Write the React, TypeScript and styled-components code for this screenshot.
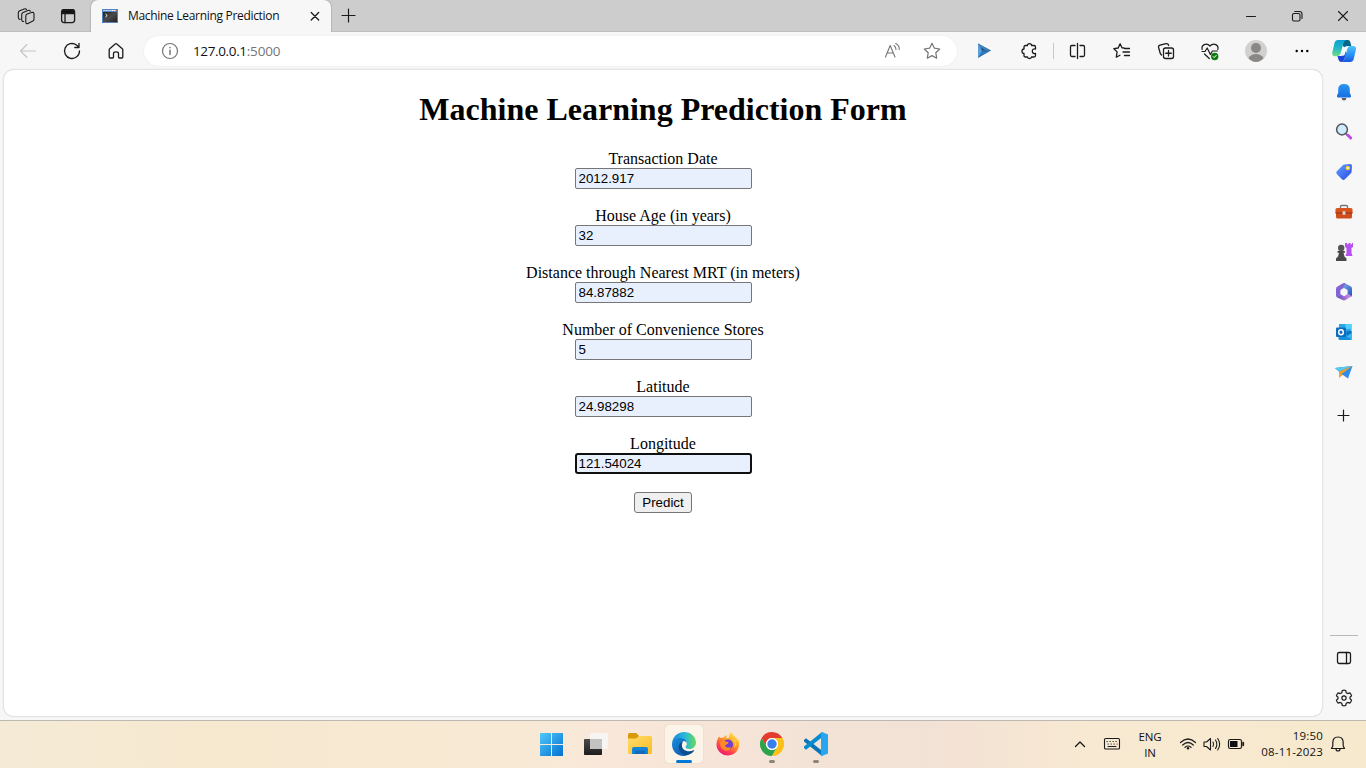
import React from 'react';
import styled, { createGlobalStyle } from 'styled-components';

const GlobalStyle = createGlobalStyle`
  * { box-sizing: border-box; }
  body { margin: 0; overflow: hidden; background: #f7f7f7; }
`;

const ui = `'Open Sans', 'Noto Sans', sans-serif`;

const Screen = styled.div`
  display: flex;
  flex-direction: column;
  width: 1366px;
  height: 768px;
  overflow: hidden;
  background: #f7f7f7;
  font-family: ${ui};
  color: #111;
`;

const Slot = styled.div<{ $w: number; $h?: number }>`
  flex: none;
  display: flex;
  align-items: center;
  justify-content: center;
  width: ${(p) => p.$w}px;
  height: ${(p) => (p.$h ? `${p.$h}px` : '100%')};
  svg { display: block; overflow: visible; }
`;

const TabStrip = styled.header`
  display: flex;
  flex: none;
  height: 32px;
  background: #cdcdcd;
  box-shadow: inset 0 -1px 0 #c0c0c0;
`;

const Tab = styled.div`
  display: flex;
  align-items: center;
  width: 240px;
  height: 32px;
  padding-left: 11px;
  background: #f7f7f7;
  border-radius: 7px 7px 0 0;
  box-shadow: 0 0 2px rgba(0, 0, 0, 0.35);
  clip-path: inset(-3px -3px 0 -3px);
`;

const TabTitle = styled.span`
  width: 170px;
  margin-left: 10px;
  font-size: 12px;
  line-height: 16px;
  letter-spacing: -0.31px;
  white-space: nowrap;
`;

const Spacer = styled.div`
  flex: 1;
`;

const Toolbar = styled.nav`
  display: flex;
  flex: none;
  align-items: center;
  height: 38px;
  padding-left: 6px;
`;

const AddressBar = styled.div`
  display: flex;
  align-items: center;
  width: 813px;
  height: 30px;
  margin-left: 6px;
  padding-left: 6px;
  border-radius: 15px;
  background: #fff;
  box-shadow: 0 0 3px rgba(0, 0, 0, 0.06);
`;

const Url = styled.span`
  flex: 1;
  margin-left: 3px;
  font-size: 13.5px;
  line-height: 20px;
  letter-spacing: -0.36px;
  span { color: #767676; letter-spacing: -0.15px; }
`;

const VLine = styled.div`
  width: 1px;
  height: 16px;
  background: #c8c8c8;
`;

const Middle = styled.div`
  display: flex;
  flex: none;
  height: 650px;
  padding-left: 4px;
`;

const Page = styled.main`
  width: 1318px;
  height: 646px;
  border-radius: 9px;
  background: #fff;
  box-shadow: 0 0 2px rgba(0, 0, 0, 0.3);
  font-family: 'Liberation Serif', serif;
  color: #000;
`;

const Heading = styled.h1`
  margin: 0;
  padding-top: 21px;
  font-size: 32px;
  line-height: 37px;
  text-align: center;
`;

const Form = styled.form`
  display: flex;
  flex-direction: column;
  align-items: center;
  gap: 18px;
  padding-top: 22px;
`;

const Field = styled.label`
  display: flex;
  flex-direction: column;
  align-items: center;
  font-size: 16px;
  line-height: 18px;
`;

const Input = styled.input<{ $active?: boolean }>`
  width: 177px;
  height: 21px;
  margin: 0;
  padding: ${(p) => (p.$active ? '0 2px' : '1px 3px')};
  border: ${(p) => (p.$active ? '2px solid #101010' : '1px solid #767676')};
  border-radius: ${(p) => (p.$active ? 3 : 2)}px;
  outline: none;
  background: #e8f0fe;
  color: #000;
  font: 13.333px 'Liberation Sans', sans-serif;
`;

const Submit = styled.button`
  width: 58px;
  height: 21px;
  padding: 0;
  border: 1px solid #767676;
  border-radius: 3px;
  background: #efefef;
  color: #000;
  font: 13.333px 'Liberation Sans', sans-serif;
`;

const Sidebar = styled.aside`
  display: flex;
  flex-direction: column;
  align-items: center;
  width: 44px;
  padding-top: 2px;
`;

const HLine = styled.div`
  width: 28px;
  height: 1px;
  margin-bottom: 2px;
  background: #b9b9b9;
`;

const Taskbar = styled.footer`
  display: flex;
  flex: none;
  align-items: center;
  height: 48px;
  padding: 0 0 1px 530px;
  border-top: 1px solid #bcb9b3;
  background: linear-gradient(90deg, #f4ead5 0%, #f7e9d0 15%, #f7e9d3 35%, #f9e8d9 44%, #f3e2d6 60%, #f2e1d5 68%, #f8e9d2 80%, #f7e9cd 100%);
`;

const AppSlot = styled.div`
  display: flex;
  align-items: center;
  justify-content: center;
  width: 44px;
  height: 46px;
`;

const AppTile = styled.div<{ $active?: boolean }>`
  position: relative;
  display: flex;
  align-items: center;
  justify-content: center;
  width: 38px;
  height: 38px;
  border-radius: 4px;
  background: ${(p) => (p.$active ? '#fcf4e9' : 'transparent')};
  box-shadow: ${(p) => (p.$active ? '0 0 1px rgba(120, 90, 50, 0.35)' : 'none')};
  svg { display: block; overflow: visible; }
`;

const Indicator = styled.i<{ $active?: boolean }>`
  position: absolute;
  bottom: 0;
  left: 50%;
  width: ${(p) => (p.$active ? 16 : 6)}px;
  height: 3px;
  border-radius: 2px;
  background: ${(p) => (p.$active ? '#0078d4' : '#8b857c')};
  transform: translateX(-50%);
`;

const TrayText = styled.div<{ $w: number; $right?: boolean }>`
  flex: none;
  display: flex;
  flex-direction: column;
  align-items: ${(p) => (p.$right ? 'flex-end' : 'center')};
  width: ${(p) => p.$w}px;
  padding-top: ${(p) => (p.$right ? 0 : 2)}px;
  font-size: 11.5px;
  line-height: 16px;
  letter-spacing: ${(p) => (p.$right ? 0.17 : -0.1)}px;
  white-space: nowrap;
`;

type IconProps = { children: React.ReactNode; size?: number; stroke?: string; sw?: number };

const Line = ({ children, size = 20, stroke = '#1b1b1b', sw = 1.2 }: IconProps) => (
  <svg width={size} height={size} viewBox={`0 0 ${size} ${size}`} fill="none" stroke={stroke} strokeWidth={sw} strokeLinecap="round" strokeLinejoin="round">
    {children}
  </svg>
);

const Workspaces = () => (
  <Line sw={1.1}>
    <path d="M10.600 8.300 15.500 6.500Q18 5.800 18 8V13.300Q18 14.600 16.800 15.100L12 17.400Q9.800 18.200 9.800 16V10.200Q9.800 8.700 10.600 8.300Z" />
    <path d="M7.700 15.500Q5.700 15.600 5.700 13.600V8.600Q5.700 7.100 7.100 6.500L11.900 4.500Q13.800 3.900 14.300 5.200" />
    <path d="M4.200 13.400Q2.300 13.200 2.300 11.400V6.900Q2.300 5.400 3.700 4.700L8.200 2.900Q9.900 2.300 10.500 3.500" />
  </Line>
);
const TabActions = () => (
  <Line sw={1.3}>
    <rect x="3.600" y="3.600" width="13" height="13" rx="2.500" />
    <path d="M4.500 4h11.200l.5 3.500H4z" fill="#111" />
    <path d="M7 8v8.500" />
  </Line>
);
const Console = () => (
  <svg width="16" height="14" viewBox="0 0 16 14">
    <defs><linearGradient id="con" x2="1" y2="1"><stop stopColor="#222" /><stop offset=".5" stopColor="#4b4b4b" /><stop offset="1" stopColor="#222" /></linearGradient></defs>
    <rect width="16" height="14" fill="#5583c0" /><path d="M1 1h14v1H1z" fill="#a9c8ee" />
    <path d="M10 1h1v1h-1zM12 1h1v1h-1z" fill="#fff" /><path d="M14 1h1v1h-1z" fill="#d55" />
    <rect x="1" y="3" width="14" height="10" fill="url(#con)" /><path d="m3.500 5 1.700 1.500L3.500 8" fill="none" stroke="#fff" strokeWidth="1" />
  </svg>
);
const Back = () => <Line stroke="#c5c5c5" sw={1.1}><path d="M17.500 10H2.500M9 3.500 2.500 10 9 16.500" /></Line>;
const Refresh = () => <Line sw={1.3}><path d="M17.500 10A7.500 7.500 0 1 1 14.500 4L17 6.200M17 2.300v4.200h-4.200" /></Line>;
const Home = () => <Line sw={1.3}><path d="M3.200 8.900Q3.200 8.200 3.700 7.700L9.200 3Q10 2.400 10.800 3L16.300 7.700Q16.800 8.200 16.800 8.900V16Q16.800 17 15.800 17H13.300Q12.500 17 12.500 16V12.500Q12.500 10.800 10 10.800T7.500 12.500V16Q7.500 17 6.700 17H4.200Q3.200 17 3.200 16Z" /></Line>;
const Info = () => <Line stroke="#757575"><circle cx="10" cy="10" r="7.500" /><path d="M10 9.300v4.200M10 6.500v.2" strokeWidth="1.500" /></Line>;
const ReadAloud = () => <Line stroke="#757575" sw={1.1}><path d="M3.500 16 8.200 4.500 13 16M5.200 12H11.300M12 4.500Q14 6 14 8.500M13.700 2.500Q17.700 4.500 17.200 8.500" /></Line>;
const Star = () => <Line stroke="#757575"><path d="m10 2.300 2.400 4.900 5.300.8-3.900 3.800.9 5.400-4.700-2.600-4.700 2.600.9-5.400L2.300 8l5.300-.8Z" /></Line>;
const Play = () => (
  <svg width="14" height="16" viewBox="0 0 14 16"><path d="M1 .5 14 7.500 1 15Z" fill="#2867a5" /><path d="M1 .5 14 7.500H5Z" fill="#4482bb" /><path d="M1 15 5 8 1 .5Z" fill="#5b9fdc" /><path d="m2 13.500 10-5H5Z" fill="#327abd" /><path d="M4 4.500 9 7.500H5Z" fill="#1d4e88" /></svg>
);
const Puzzle = () => <Line sw={1.3}><path d="M8.500 4.500Q8.300 2.700 10.500 2.700T12.600 4.500H15Q16.500 4.500 16.500 6V8Q13.300 7.500 13.300 10.200T16.500 12.500V14.500Q16.500 16 15 16H12.500Q12.500 17.500 10.500 17.500T8.500 16H6.500Q5 16 5 14.500V12.500Q3 12.300 3 10.200T5 8V6Q5 4.500 6.500 4.500Z" /></Line>;
const Split = () => <Line sw={1.3}><path d="M10.500 2.500v15M8 4.500H4.800Q3.500 4.500 3.500 6v8q0 1.500 1.300 1.500H8M13 4.500h3.200Q17.500 4.500 17.500 6v8q0 1.500-1.300 1.500H13" /></Line>;
const Favorites = () => <Line sw={1.3}><path d="M12 7 10 6.800 8.100 2.800 6.200 7 1.900 7.700l3.200 3.200-.8 5.300 3.600-2M12.500 7.500h5M11 11h6.500M12.500 14.500h5" /></Line>;
const Collections = () => <Line sw={1.3}><rect x="7.500" y="7" width="10" height="10.500" rx="2" /><path d="M12.500 9.500v5.500M9.700 12.250h5.600M5.500 14 4.300 12.500 2.600 6.500Q2.200 4.700 4 4.200L10 2.600Q12 2.200 12.700 4.500" /></Line>;
const Health = () => (
  <Line sw={1.2}><path d="M2.200 8.500C1 4.300 6.200.8 10 5 13.800.8 19 4.300 17.800 8.500M2 10.500H5L7.200 7l3.200 6.500 2-3.500h5M4.500 13 9.300 17.500" /><circle cx="14.700" cy="15.500" r="3.700" fill="#107c10" stroke="none" /><path d="m13.200 15.600 1 1 2-2.200" stroke="#fff" strokeWidth="1" /></Line>
);
const Avatar = () => <svg width="22" height="22" viewBox="0 0 22 22"><circle cx="11" cy="11" r="11" fill="#d2d0ce" /><circle cx="11" cy="8" r="5" fill="#8a8886" /><path d="M3.500 18Q6 14 11 14t7.500 4Q15 22 11 22T3.500 18Z" fill="#8a8886" /></svg>;
const Dots = () => <svg width="16" height="16"><circle cx="2.700" cy="8" r="1.200" /><circle cx="8" cy="8" r="1.200" /><circle cx="13.300" cy="8" r="1.200" /></svg>;
const Copilot = () => (
  <svg width="24" height="22" viewBox="0 0 24 22">
    <defs>
      <linearGradient id="cpA" x2="0" y2="1"><stop stopColor="#0d9fd4" /><stop offset=".5" stopColor="#22b8c4" /><stop offset="1" stopColor="#72df87" /></linearGradient>
      <linearGradient id="cpB" x2="0" y2="1"><stop stopColor="#4fc6f9" /><stop offset=".6" stopColor="#258cf4" /><stop offset="1" stopColor="#1757e4" /></linearGradient>
    </defs>
    <path d="M11 0h5q1.800 0 2.300 2l1 4H16q-2 0-3 2l-2-2Z" fill="#08668b" />
    <path d="M5.500 16h4l3-7 2 4-2.500 7q-.8 2-2.500 2-2.500 0-3.200-3Z" fill="#1b45d6" />
    <path d="M6 0h8q-2 1-2.800 4L8.700 13q-.8 3.200-4.200 3.200H3.200Q-.5 16.200.4 12L2.500 3Q3.300 0 6 0Z" fill="url(#cpA)" />
    <path d="M18 6h3q3.800 0 2.800 4.200L21.700 19q-.7 3-3.700 3H9.500q2.500-.7 3.300-4l2.300-8.500Q16 6 18 6Z" fill="url(#cpB)" />
    <path d="M13.500 6.500H16q-1 .5-1.500 2.500l-1.500 5q-.5 1.700-2 1.700H9q1-.5 1.500-2.500l1.300-4.700q.5-2 1.700-2Z" fill="#f7fbff" />
  </svg>
);

const BellColor = () => <svg width="16" height="18" viewBox="0 0 16 18"><defs><linearGradient id="bl" x2="0" y2="1"><stop stopColor="#2998f2" /><stop offset="1" stopColor="#176ee1" /></linearGradient></defs><path d="M5.500 15h5q-.5 2.500-2.500 2.500T5.500 15Z" fill="#5c6066" /><path d="M2.200 6.500Q2.200 1 8 1t5.800 5.500V10L15 12.500q.5 2-1 2H2q-1.500 0-1-2l1.200-2.500Z" fill="url(#bl)" /></svg>;
const SearchColor = () => <svg width="18" height="18" viewBox="0 0 18 18"><path d="m10.500 10.500 2.500 2.500" stroke="#555" strokeWidth="1.500" /><path d="m12.700 12 3 3" stroke="#bd4be8" strokeWidth="3" strokeLinecap="round" /><circle cx="7" cy="6.500" r="5.400" fill="#cfeafb" stroke="#51555a" strokeWidth="1.500" /></svg>;
const TagColor = () => <svg width="18" height="18" viewBox="0 0 18 18"><defs><linearGradient id="tg" x2="1" y2="1"><stop stopColor="#65a3ff" /><stop offset="1" stopColor="#2847e4" /></linearGradient></defs><path d="M9.500 1.600 15 1q2-.2 2 1.700l-.4 6q0 .8-.7 1.500l-6 6q-1.500 1.500-3 0L1.800 11q-1.300-1.500 0-2.800l6-5.900q.7-.6 1.700-.7Z" fill="url(#tg)" /><circle cx="12.800" cy="5" r="1.700" fill="#fff" stroke="#f0c228" strokeWidth="1.200" /></svg>;
const Toolbox = () => <svg width="18" height="16" viewBox="0 0 18 16"><path d="M5.500 4V2.500q0-1 1-1h5q1 0 1 1V4" fill="none" stroke="#777" strokeWidth="1.300" /><rect x="0.500" y="4" width="17" height="6" rx="1.500" fill="#d9531f" /><path d="M1 9h16v4q0 1.500-1.500 1.500h-13Q1 14.500 1 13Z" fill="#cf4c1b" /><path d="M.5 8.300h17v1.200H.5z" fill="#9a3714" /><rect x="7.500" y="7.300" width="3" height="3.500" rx=".7" fill="#d7d7d7" /></svg>;
const Games = () => <svg width="18" height="18" viewBox="0 0 18 18"><path d="M10 0h2v1.300h1.500V0h2v1.300H17V0h1v4l-1.500 1v5l1 3h-7l1-3V5L10 4Z" fill="#b650f1" /><circle cx="6.200" cy="5" r="3.200" fill="#555" /><path d="M2.500 8h7.400v1.800H8.500l1 3.800 2 2V18H1v-2.400l2-2 1-3.800H2.500Z" fill="#494949" /></svg>;
const M365 = () => (
  <svg width="18" height="18" viewBox="0 0 18 18"><defs><linearGradient id="ma" x2="1" y2="1"><stop stopColor="#86b8f2" /><stop offset="1" stopColor="#244cb5" /></linearGradient><linearGradient id="mb" x2="1"><stop stopColor="#5b4bc0" /><stop offset="1" stopColor="#dd8fe4" /></linearGradient></defs>
    <path d="m9.500 0 6 3.300q1.500.8 1.500 2.500v6q0 1.500-1.500 2.500l-4-2.300V7.500L6 5Z" fill="url(#ma)" /><path d="m9 0 1.500.5L7 6.500V11L2 14.500Q1 13.500 1 12V6q0-1.700 1.500-2.600L7.500.5Z" fill="#8165d4" /><path d="m2 14.300 5-3.200 2.500 1.300 4-1.500 3 2.300-6 3.900q-1.500.8-3 0Z" fill="url(#mb)" /><path d="m9 5 3.600 2v4.200L9 13.200l-3.600-2V7Z" fill="#f7f7f7" /></svg>
);
const Outlook = () => <svg width="17" height="16" viewBox="0 0 17 16"><path d="M3 0h12.500v9H3Z" fill="#28a8ea" /><path d="M9.500 0h6v5h-6z" fill="#50d0fa" /><path d="M2.500 8H16v6.500q0 1.500-1.500 1.500H4q-1.500 0-1.500-1.500Z" fill="#1490df" /><path d="M16 8 10 12l6 3.500Z" fill="#35b9f1" /><path d="M10.500 7h5v2L11 12z" fill="#1171bd" /><rect y="3.500" width="10" height="9.500" rx="1" fill="#0f6cbd" /><ellipse cx="5" cy="8.200" rx="2.300" ry="2.500" fill="none" stroke="#fff" strokeWidth="1.400" /></svg>;
const Drop = () => <svg width="18" height="14" viewBox="0 0 18 14"><path d="M0 3 17.500 1 6.500 9Z" fill="#1688ca" /><path d="M0 3 17.500 1 4 6.500Z" fill="#56c9f5" /><path d="M17.500 1 4 6.500V13L7 10.500Z" fill="#eba32c" /><path d="M17.500 1 6.500 9l6.500 4.500Z" fill="#348be9" /></svg>;
const Plus = ({ size = 16 }: { size?: number }) => <Line size={size} sw={1.2}><path d={`M${size / 2 - 0.5} 1v${size - 3}M1 ${size / 2 - 0.5}h${size - 3}`} /></Line>;
const Panel = () => <Line size={18} sw={1.3}><rect x="2.500" y="3.500" width="13" height="11" rx="1.800" /><path d="M11.500 3.500v11" /></Line>;
const Gear = () => <Line size={18} sw={1.2}><path d="M7.300 1.500Q9 .9 10.700 1.500L11.200 3.700 12.700 4.600 14.900 3.900Q16 5 16.600 6.900L15 8.300V9.700L16.600 11.100Q16 13 14.900 14.100L12.700 13.400 11.200 14.300 10.700 16.500Q9 17.100 7.300 16.500L6.800 14.300 5.300 13.400 3.100 14.100Q2 13 1.400 11.100L3 9.700V8.300L1.400 6.900Q2 5 3.100 3.900L5.300 4.600 6.800 3.700Z" /><circle cx="9" cy="9" r="2.100" /></Line>;

const Windows = () => <svg width="24" height="24" viewBox="0 0 24 24"><defs><linearGradient id="wn" gradientUnits="userSpaceOnUse" x1="0" y1="0" x2="24" y2="24"><stop stopColor="#54cafb" /><stop offset="1" stopColor="#006fd0" /></linearGradient></defs><path d="M0 1h11v11H0zM12 1h11v11H12zM0 13h11v11H0zM12 13h11v11H12z" fill="url(#wn)" /></svg>;
const TaskView = () => <svg width="24" height="24" viewBox="0 0 24 24"><defs><linearGradient id="tv" x2="0" y2="1"><stop stopColor="#4a4a4a" /><stop offset="1" stopColor="#1d1d1d" /></linearGradient></defs><rect y="7" width="18" height="16" rx=".7" fill="url(#tv)" /><rect x="6" y="1" width="18" height="16" rx=".7" fill="#f5f5f5" opacity=".95" /><path d="M6 7h12v10H6z" fill="#c2c2c2" /></svg>;
const Explorer = () => <svg width="24" height="24" viewBox="0 0 24 24"><defs><linearGradient id="fo" x2="1" y2="1"><stop stopColor="#ffdc6d" /><stop offset="1" stopColor="#f9bd23" /></linearGradient></defs><path d="M0 2.500Q0 1 1.500 1h6.800L11 4v5H0Z" fill="#d99a09" /><path d="M0 6.500h8L11 4h11.500q1.500 0 1.500 1.500v15q0 1.500-1.500 1.500h-21Q0 22 0 20.500Z" fill="url(#fo)" /><path d="M4 22v-5q0-2 2-2h12q2 0 2 2v5Z" fill="#1384d8" /><path d="M7.500 18.500h9q1 0 1 1V22H6.500v-2.500q0-1 1-1Z" fill="#0f6cbd" /></svg>;
const Edge = () => (
  <svg width="24" height="24" viewBox="0 0 24 24"><defs><linearGradient id="ea" x2="1"><stop stopColor="#1689d8" /><stop offset=".55" stopColor="#2bb9da" /><stop offset="1" stopColor="#68dc59" /></linearGradient><linearGradient id="eb" x2="1" y2="1"><stop stopColor="#178edf" /><stop offset="1" stopColor="#1150a1" /></linearGradient></defs>
    <path d="M0 11.500C.5 5 5.500 0 12 0c7 0 12 5 12 10.500 0 4-3 6.500-6.500 6.500-3 0-4-1-4-2 0-.8 1.300-1.300 1.300-3.300C14.800 9 12 7 8.500 7 4 7 1 9 0 11.500Z" fill="url(#ea)" />
    <path d="M0 12.500C0 8.500 4 6 8 6c4.500 0 7 3 7 5.700 0-1.700-2-2.700-3.500-2.700-2 0-3 2.500-3 5 0 5 5 8.500 9.500 7-1.500 2-4 3-6.500 3C5 24 0 19 0 12.500Z" fill="url(#eb)" />
    <path d="M11.500 9C7 10.500 5 16 9 20.500c3 3.500 9 3.500 13-1.500.4-.5 0-1-.6-.7-3.700 1.900-11 1-11.500-4.300-.2-2 .6-3.800 1.600-5Z" fill="#0b4d91" />
  </svg>
);
const Firefox = () => (
  <svg width="24" height="24" viewBox="0 0 24 24"><defs><linearGradient id="fx" x1=".8" x2=".2" y2="1"><stop stopColor="#fff04a" /><stop offset=".4" stopColor="#ff9c25" /><stop offset=".75" stopColor="#ff3750" /><stop offset="1" stopColor="#e21587" /></linearGradient></defs>
    <path d="M3 4.500Q4 5.500 5 6q1-.5 2.500-.5Q9 3.500 10.500 3v3.500Q12 6 13 5.500C12.500 3 14 1 15.500 0c1 4 6 5 6.500 9l.5-1.500C25 15 20.500 23.500 12 23.500 5.500 23.500.5 18.500.5 12.500.5 9 1.800 6.500 3 4.500Z" fill="url(#fx)" />
    <circle cx="12" cy="12.500" r="5" fill="#7140cf" /><path d="M4.500 9.500c2-1.500 4-.5 6 .3 1.500 0 2 .7 2 1.200-1 1.800-3 1.500-3.500 2.500 1 2.500 4 2.500 6 1.500-1 3-4 4.500-7 3.200C5 17 3.500 13 4.500 9.500Z" fill="#ff8a28" /><path d="M16 6c3 3 4 6 2 10 3-2 3.500-7-2-10Z" fill="#ffda41" />
  </svg>
);
const Chrome = () => <svg width="24" height="24" viewBox="0 0 24 24"><path d="M1.600 6A12 12 0 0 1 22.400 6H12a6 6 0 0 0-5.200 9Z" fill="#e33b2e" /><path d="M1.600 6A12 12 0 0 0 12 24l5.200-9A6 6 0 0 1 6.800 15Z" fill="#2ba24c" /><path d="M22.400 6A12 12 0 0 1 12 24l5.200-9A6 6 0 0 0 12 6Z" fill="#fbc116" /><circle cx="12" cy="12" r="6" fill="#fff" /><circle cx="12" cy="12" r="4.700" fill="#377fed" /></svg>;
const Code = () => <svg width="24" height="24" viewBox="0 0 24 24"><path d="m0 8 2-1.800L19 19.500 18 24 0 9.500Z" fill="#0875b9" /><path d="m0 16 2 1.800L19 4.500 18 0 0 14.500Z" fill="#078bd1" /><path d="M18 0 24 2.500v19L18 24q-1-.2-1-1.500v-21Q17 .2 18 0Z" fill="#27a5ee" /></svg>;

const Chevron = () => <Line sw={1.4}><path d="m5.500 12.500 4.500-4.500 4.500 4.500" /></Line>;
const Keyboard = () => <Line sw={1.1}><rect x="2.500" y="4.500" width="15" height="10.500" rx="1.300" /><path d="M5 7.500h.3M8 7.500h.3M11 7.500h.3M14 7.500h.3M6 10h.3M9 10h.3M12 10h.3M15 10h.1M6 12.500h8" /></Line>;
const Wifi = () => <Line sw={1.2}><path d="M2.500 8.500Q10 1.500 17.500 8.500M4.700 11Q10 6 15.300 11M7 13.300q3-2.600 6 0" /><circle cx="10" cy="14.200" r="1.200" fill="#111" stroke="none" /></Line>;
const Volume = () => <Line sw={1.1}><path d="M2 8v4.500h2.500L8.500 16V4.500L4.500 8ZM11 8q1.300 2.200 0 4.500M13.500 6q2.700 4.200 0 8.500M15.700 4.500q4 5.700 0 11.500" /></Line>;
const Battery = () => <Line sw={1.2}><rect x="2.500" y="5.500" width="13" height="9" rx="1.800" /><path d="M4 7h7.500v6H4z" fill="#111" stroke="none" /><path d="M17.200 8.700v2.600" strokeWidth="1.800" /></Line>;
const Bell = () => <Line size={18} sw={1.2}><path d="M3.800 7.800Q3.800 2 9 2t5.200 5.800V11L15.500 13.500H2.500L3.800 11ZM7 13.700q0 2.300 2 2.300t2-2.300" /></Line>;

const fields = [
  ['Transaction Date', '2012.917'],
  ['House Age (in years)', '32'],
  ['Distance through Nearest MRT (in meters)', '84.87882'],
  ['Number of Convenience Stores', '5'],
  ['Latitude', '24.98298'],
  ['Longitude', '121.54024'],
];

const sideApps = [BellColor, SearchColor, TagColor, Toolbox, Games, M365, Outlook, Drop];

export default function App() {
  return (
    <Screen>
      <GlobalStyle />
      <TabStrip>
        <Slot $w={52}><Workspaces /></Slot>
        <Slot $w={32}><TabActions /></Slot>
        <Slot $w={7} />
        <Tab>
          <Console />
          <TabTitle>Machine Learning Prediction</TabTitle>
          <Slot $w={33}><Line size={8} sw={1.3}><path d="m.2.5 7.500 7.500M7.700.5.2 8" /></Line></Slot>
        </Tab>
        <Slot $w={35}><Plus /></Slot>
        <Spacer />
        <Slot $w={46}><Line size={10} sw={1}><path d="M.5 5.500h9" /></Line></Slot>
        <Slot $w={46}><Line size={10} sw={1.1}><rect x=".5" y="2.500" width="7.500" height="7.500" rx="1.500" /><path d="M2.800.5h4.700Q10 .5 10 3v4.500" /></Line></Slot>
        <Slot $w={46}><Line size={10} sw={1.1}><path d="m.5.500 9 9M9.500.500l-9 9" /></Line></Slot>
      </TabStrip>
      <Toolbar>
        <Slot $w={44}><Back /></Slot>
        <Slot $w={44}><Refresh /></Slot>
        <Slot $w={44}><Home /></Slot>
        <AddressBar>
          <Slot $w={40}><Info /></Slot>
          <Url>127.0.0.1<span>:5000</span></Url>
          <Slot $w={40}><ReadAloud /></Slot>
          <Slot $w={40}><Star /></Slot>
          <Slot $w={5} />
        </AddressBar>
        <Slot $w={54}><Play /></Slot>
        <Slot $w={36}><Puzzle /></Slot>
        <Slot $w={12}><VLine /></Slot>
        <Slot $w={36}><Split /></Slot>
        <Slot $w={54}><Favorites /></Slot>
        <Slot $w={34}><Collections /></Slot>
        <Slot $w={54}><Health /></Slot>
        <Slot $w={38}><Avatar /></Slot>
        <Slot $w={54}><Dots /></Slot>
        <Slot $w={30}><Copilot /></Slot>
      </Toolbar>
      <Middle>
        <Page>
          <Heading>Machine Learning Prediction Form</Heading>
          <Form>
            {fields.map(([label, value], i) => (
              <Field key={label}>
                {label}
                <Input defaultValue={value} $active={i === fields.length - 1} />
              </Field>
            ))}
            <Submit type="button">Predict</Submit>
          </Form>
        </Page>
        <Sidebar>
          {sideApps.map((Icon, i) => <Slot key={i} $w={44} $h={40}><Icon /></Slot>)}
          <Slot $w={44} $h={48}><Plus size={14} /></Slot>
          <Spacer />
          <HLine />
          <Slot $w={44} $h={40}><Panel /></Slot>
          <Slot $w={44} $h={40}><Gear /></Slot>
          <Slot $w={44} $h={2} />
        </Sidebar>
      </Middle>
      <Taskbar>
        <AppSlot><AppTile><Windows /></AppTile></AppSlot>
        <AppSlot><AppTile><TaskView /></AppTile></AppSlot>
        <AppSlot><AppTile><Explorer /></AppTile></AppSlot>
        <AppSlot><AppTile $active><Edge /><Indicator $active /></AppTile></AppSlot>
        <AppSlot><AppTile><Firefox /></AppTile></AppSlot>
        <AppSlot><AppTile><Chrome /><Indicator /></AppTile></AppSlot>
        <AppSlot><AppTile><Code /><Indicator /></AppTile></AppSlot>
        <Spacer />
        <Slot $w={32}><Chevron /></Slot>
        <Slot $w={32}><Keyboard /></Slot>
        <TrayText $w={44}><span>ENG</span><span>IN</span></TrayText>
        <Slot $w={32}><Wifi /></Slot>
        <Slot $w={16}><Volume /></Slot>
        <Slot $w={32}><Battery /></Slot>
        <TrayText $w={71} $right><span>19:50</span><span>08-11-2023</span></TrayText>
        <Slot $w={30}><Bell /></Slot>
        <Slot $w={13} />
      </Taskbar>
    </Screen>
  );
}
